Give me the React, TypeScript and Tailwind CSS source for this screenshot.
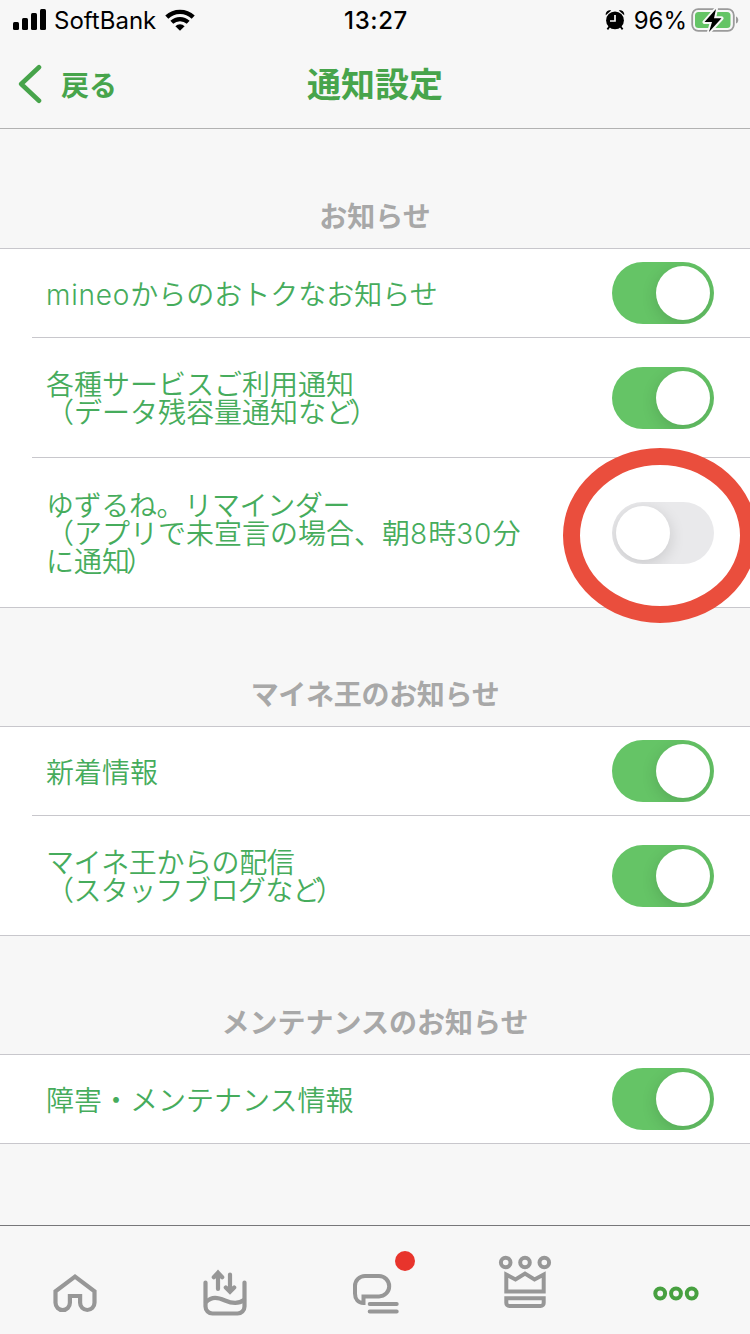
import { Fragment, useState } from 'react';
import clsx from 'clsx';

type Line = { text: string; tracking?: string };
type Item = { id: string; lines: Line[]; height: string; marked?: boolean };
type Section = { title: string; height: string; tracking?: string; items: Item[] };

const sections: Section[] = [
  {
    title: 'お知らせ',
    height: 'h-[120px]',
    items: [
      { id: 'deals', lines: [{ text: 'mineoからのおトクなお知らせ' }], height: 'h-[88px]' },
      {
        id: 'usage',
        lines: [{ text: '各種サービスご利用通知' }, { text: '（データ残容量通知など）' }],
        height: 'h-[119px]',
      },
      {
        id: 'yuzurune',
        lines: [
          { text: 'ゆずるね。リマインダー', tracking: 'tracking-[-0.35px]' },
          { text: '（アプリで未宣言の場合、朝8時30分' },
          { text: 'に通知）' },
        ],
        height: 'h-[149px]',
        marked: true,
      },
    ],
  },
  {
    title: 'マイネ王のお知らせ',
    height: 'h-[119px]',
    tracking: 'tracking-[-0.3px]',
    items: [
      { id: 'news', lines: [{ text: '新着情報' }], height: 'h-[88px]' },
      {
        id: 'blog',
        lines: [
          { text: 'マイネ王からの配信', tracking: 'tracking-[-0.4px]' },
          { text: '（スタッフブログなど）', tracking: 'tracking-[-0.6px]' },
        ],
        height: 'h-[119px]',
      },
    ],
  },
  {
    title: 'メンテナンスのお知らせ',
    height: 'h-[119px]',
    items: [{ id: 'maintenance', lines: [{ text: '障害・メンテナンス情報' }], height: 'h-[88px]' }],
  },
];

const StatusBar = () => (
  <div className="h-10 flex items-center text-black text-[24px] leading-none">
    <div className="flex-1 flex items-center pl-[13px]">
      <svg width="33" height="22" viewBox="0 0 33 22">
        <rect x="0" y="13" width="6" height="8" rx="1.5" />
        <rect x="9" y="9" width="6" height="12" rx="1.5" />
        <rect x="18" y="4" width="6" height="17" rx="1.5" />
        <rect x="27" y="0" width="6" height="21" rx="1.5" />
      </svg>
      <span className="ml-[8px] pt-[2px]">SoftBank</span>
      <svg className="ml-[9px]" width="30" height="22" viewBox="0 0 30 22" fill="none" stroke="#000">
        <path d="M1.8 8.2a19 19 0 0 1 26.4 0" strokeWidth="4.4" />
        <path d="M6.8 13.3a12 12 0 0 1 16.4 0" strokeWidth="4.2" />
        <path d="M10.4 17.2a6.6 6.6 0 0 1 9.2 0L15 21.8z" fill="#000" stroke="none" />
      </svg>
    </div>
    <span className="pt-[2px] font-medium tracking-[0.6px]">13:27</span>
    <div className="flex-1 flex items-center justify-end pr-[11px]">
      <svg width="20" height="22" viewBox="0 0 20 22">
        <circle cx="10" cy="11.4" r="8.9" />
        <path d="M0.800 6.200C0.200 3 3.200 0.500 6.200 1.500zM19.200 6.200C19.800 3 16.800 0.500 13.800 1.500z" />
        <path d="M4.500 17.500L2.400 20.400M15.500 17.500l2.100 2.900" stroke="#000" strokeWidth="1.800" />
        <path d="M10 6v6H5" fill="none" stroke="#f7f7f7" strokeWidth="1.700" />
      </svg>
      <span className="ml-[9px] pt-[2px]">96%</span>
      <svg className="ml-[4px]" width="48" height="26" viewBox="0 0 48 26">
        <rect x="1.200" y="2.200" width="41.600" height="21.600" rx="6" fill="none" stroke="#9b9b9b" strokeWidth="1.800" />
        <path d="M45 9.500c3 1 3 6 0 7z" fill="#9b9b9b" />
        <rect x="4" y="5" width="35.500" height="16" rx="3.500" fill="#65c466" />
        <path
          d="M25 2L13.500 15H21l-3 10L30.500 11.300H23z"
          stroke="#f7f7f7"
          strokeWidth="4"
          strokeLinejoin="round"
        />
        <path d="M25 2L13.500 15H21l-3 10L30.500 11.300H23z" />
      </svg>
    </div>
  </div>
);

const NavBar = () => (
  <div className="h-[88px] grid grid-cols-3 items-center font-bold text-[#47a44b]">
    <button className="flex items-center pl-[18px] text-left">
      <svg width="24" height="40" viewBox="0 0 24 40" fill="none" stroke="currentColor" strokeWidth="4.600">
        <path d="M21 3.300L3.200 20L21 36.700" strokeLinecap="round" strokeLinejoin="round" />
      </svg>
      <span className="ml-[19px] pt-[4px] text-[28px] leading-none">戻る</span>
    </button>
    <h1 className="text-center pt-[2px] text-[34px] leading-none">通知設定</h1>
  </div>
);

const Toggle = ({ on, onChange }: { on: boolean; onChange: () => void }) => (
  <button
    role="switch"
    aria-checked={on}
    onClick={onChange}
    className={clsx(
      'w-[102px] h-[62px] rounded-full p-1 flex shrink-0 overflow-hidden',
      on ? 'bg-[#65c466] justify-end' : 'bg-[#e9e9eb] justify-start',
    )}
  >
    <span className="size-[54px] rounded-full bg-white shadow-[0_4px_16px_rgba(0,0,0,0.14)]" />
  </button>
);

// latin runs are set a touch wider, closing brackets sit tight to the last glyph
const LineText = ({ text }: { text: string }) => (
  <>
    {text.split(/([a-z0-9]+|）)/).map((part, i) => {
      if (part === '）') return <span key={i} className="-ml-[4px]">{part}</span>;
      if (/^[a-z]+$/.test(part)) return <span key={i} className="tracking-[0.8px]">{part}</span>;
      if (/^[0-9]+$/.test(part)) return <span key={i} className="tracking-[1px]">{part}</span>;
      return <Fragment key={i}>{part}</Fragment>;
    })}
  </>
);

const TabBar = () => (
  <nav className="h-[109px] grid grid-cols-5 border-t border-[#77777a] bg-[#f7f7f7] text-[#979797]">
    <button className="flex justify-center pt-[46px]">
      <svg width="46" height="42" viewBox="0 0 46 42" fill="none" stroke="currentColor" strokeWidth="4.200">
        <path
          d="M23 4.600L3.500 19.300V30.800a7.200 7.200 0 0 0 14.400 0V24h10.200v6.800a7.200 7.200 0 0 0 14.400 0V19.300z"
          strokeLinejoin="miter"
        />
      </svg>
    </button>
    <button className="flex justify-center pt-[43px]">
      <svg width="46" height="48" viewBox="0 0 46 48" fill="none" stroke="currentColor" strokeWidth="4.200" strokeLinecap="round">
        <path d="M3.500 13.500V37.500a7 7 0 0 0 7 7h25a7 7 0 0 0 7-7V13.500" />
        <path d="M4 33c6-6 12-4.500 19-1.500s13 4 19-.500" />
        <path d="M16 20V4M11.800 8.200L16 3.700l4.200 4.500M28 5.500v17M23.800 18.500l4.200 4.200l4.200-4.200" />
      </svg>
    </button>
    <button className="flex justify-center pt-[47px]">
      <span className="relative">
        <svg width="48" height="42" viewBox="0 0 48 42" fill="none" stroke="currentColor" strokeWidth="4" strokeLinecap="round">
          <path
            d="M12.500 23.400H28a10.200 10.200 0 0 0 0-20.400H14a10 10 0 0 0-10 10v7.500c0 5.500 3 9.500 8.500 9.500z"
            strokeLinecap="butt"
          />
          <path d="M18.700 31h27M18.700 38.500h27" />
        </svg>
        <span className="absolute left-[44px] -top-[22px] size-5 rounded-full bg-[#e8342c]" />
      </span>
    </button>
    <button className="flex justify-center pt-[29px]">
      <svg width="54" height="54" viewBox="0 0 54 54" fill="none" stroke="currentColor" strokeWidth="4">
        <circle cx="7.700" cy="7.500" r="4.800" />
        <circle cx="27" cy="7.500" r="4.800" />
        <circle cx="46.300" cy="7.500" r="4.800" />
        <path d="M8.300 19.500v17h37.400v-17l-9.200 5L27 18.500l-9.500 6z" />
        <path d="M8.300 43.300h37.400V48a3 3 0 0 1-3 3H11.300a3 3 0 0 1-3-3z" />
      </svg>
    </button>
    <button className="flex justify-center pt-[60px] text-[#47a040]">
      <svg className="ml-[2px]" width="46" height="16" viewBox="0 0 46 16" fill="none" stroke="currentColor" strokeWidth="4">
        <circle cx="7.200" cy="7.500" r="4.900" />
        <circle cx="23" cy="7.500" r="4.900" />
        <circle cx="38.700" cy="7.500" r="4.900" />
      </svg>
    </button>
  </nav>
);

const App = () => {
  const [off, setOff] = useState<string[]>(['yuzurune']);

  const toggle = (id: string) =>
    setOff((prev) => (prev.includes(id) ? prev.filter((x) => x !== id) : [...prev, id]));

  return (
    <div
      lang="ja"
      className="w-[750px] h-[1334px] flex flex-col overflow-hidden bg-[#f7f7f7] font-['Inter','Noto_Sans_CJK_JP',sans-serif]"
    >
      <header className="border-b border-[#b2b2b2]">
        <StatusBar />
        <NavBar />
      </header>

      <main className="flex-1">
        {sections.map((section) => (
          <section key={section.title}>
            <h2
              className={clsx(
                'flex items-end justify-center pb-[17px] border-b border-[#c8c7cc] text-[28px] leading-none font-bold text-[#a8a8a8]',
                section.height,
                section.tracking,
              )}
            >
              {section.title}
            </h2>
            <ul className="bg-white border-b border-[#c8c7cc]">
              {section.items.map((item, i) => (
                <li key={item.id} className={clsx('relative', i > 0 && 'pt-px')}>
                  {i > 0 && <div className="absolute top-0 left-8 right-0 h-px bg-[#c8c7cc]" />}
                  <div className={clsx('flex items-center justify-between pl-[46px] pr-9', item.height)}>
                    <p className="pt-[3px] text-[28px] leading-[28px] font-[350] text-[#46ac5c] whitespace-nowrap">
                      {item.lines.map((line) => (
                        <span key={line.text} className={clsx('block', line.tracking)}>
                          <LineText text={line.text} />
                        </span>
                      ))}
                    </p>
                    <Toggle on={!off.includes(item.id)} onChange={() => toggle(item.id)} />
                  </div>
                  {item.marked && (
                    <div className="absolute z-10 left-[563px] -top-[9px] w-[194px] h-[175px] rounded-[50%] border-[17px] border-[#ea4e3d] pointer-events-none" />
                  )}
                </li>
              ))}
            </ul>
          </section>
        ))}
      </main>

      <TabBar />
    </div>
  );
};

export default App;
